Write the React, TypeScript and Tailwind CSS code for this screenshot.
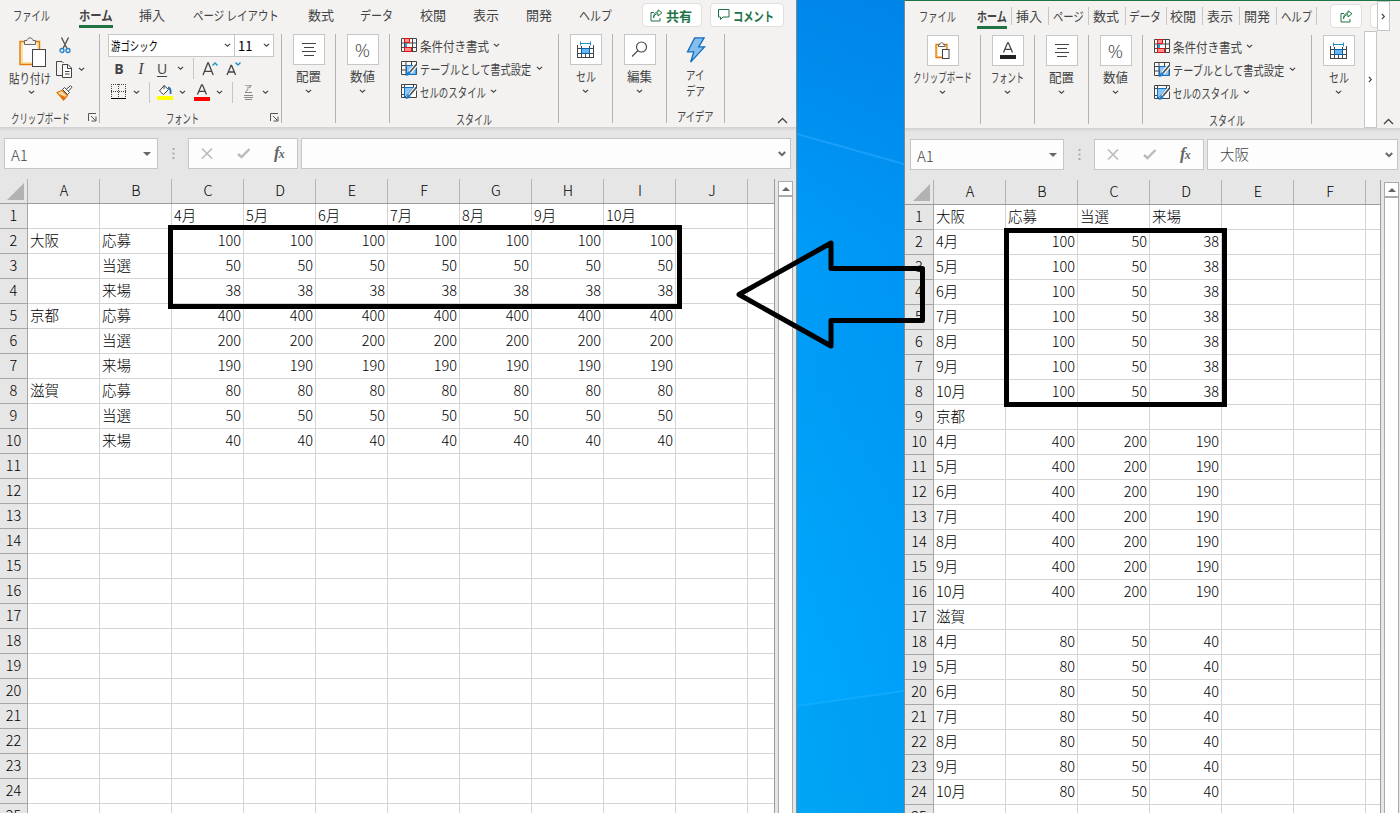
import type { ReactNode } from "react";
import { clsx } from "clsx";

// Advance width of a string in em, full-width kana and kanji counting as 1
const emWidth = (s: string) =>
  [...s].reduce((n, c) => n + (c === " " ? 0.22 : c.charCodeAt(0) < 256 ? 0.56 : 1), 0);

interface LabelProps {
  text: string;
  width: number;
  size?: number;
  className?: string;
}

// UI label squeezed to a given width, like the proportional kana of the ribbon
function Label({ text, width, size = 13, className }: LabelProps) {
  return (
    <span className={clsx("block shrink-0 leading-[15px] whitespace-nowrap", className)} style={{ width, fontSize: size }}>
      <span className="inline-block origin-left" style={{ transform: `scaleX(${width / (emWidth(text) * size)})` }}>
        {text}
      </span>
    </span>
  );
}

function Chevron({ className }: { className?: string }) {
  return (
    <svg className={clsx("block shrink-0", className)} width="7" height="5" viewBox="0 0 7 5" fill="none" stroke="#444" strokeWidth="1.2">
      <path d="M0.9 0.9L3.5 3.3L6.1 0.9" />
    </svg>
  );
}

function Launcher({ className }: { className?: string }) {
  return (
    <svg className={className} width="9" height="9" viewBox="0 0 9 9" fill="none" stroke="#555">
      <path d="M0.5 8V0.5H8M3 3L7.5 7.5M8 3.5V8H3.5" />
    </svg>
  );
}

function PasteIcon({ className }: { className?: string }) {
  return (
    <svg className={className} width="28" height="31" viewBox="0 0 28 31" fill="none">
      <path d="M1 4.5H20.5V27.5H1Z" fill="#fbe0a0" stroke="#e07b10" strokeWidth="1.4" />
      <path d="M4 7H18V25H4Z" fill="#fafafa" />
      <path d="M5.5 7.5V3.5H8C8.5 0 13.5 0 14 3.5H16.5V7.5Z" fill="#f3f2f1" stroke="#666" />
      <rect x="13.5" y="12.5" width="13" height="17" fill="#fff" stroke="#444" />
    </svg>
  );
}

function SmallPasteIcon() {
  return (
    <svg width="15" height="17" viewBox="0 0 15 17" fill="none">
      <path d="M1 2.5H12V15.5H1Z" fill="#fbe0a0" stroke="#e07b10" strokeWidth="1.3" />
      <path d="M3 5H10V14H3Z" fill="#fff" />
      <path d="M3.5 4.5V2.5H5C5 0 8.5 0 8.5 2.5H10V4.5Z" fill="#fff" stroke="#666" />
      <rect x="7.5" y="7.5" width="6.5" height="9" fill="#fff" stroke="#444" />
    </svg>
  );
}

function ScissorsIcon() {
  return (
    <svg width="12" height="17" viewBox="0 0 12 17" fill="none">
      <path d="M2.5 0.5L8 11.5M9.5 0.5L4 11.5" stroke="#555" strokeWidth="1.4" />
      <circle cx="3" cy="13.5" r="2" stroke="#1e7fc8" strokeWidth="1.3" />
      <circle cx="9" cy="13.5" r="2" stroke="#1e7fc8" strokeWidth="1.3" />
    </svg>
  );
}

function CopyIcon() {
  return (
    <svg width="17" height="17" viewBox="0 0 17 17" fill="none" stroke="#444">
      <path d="M6 14.5H0.5V0.5H6L7.5 2" />
      <path d="M6.5 3.5H12L15.5 7V16.5H6.5Z" fill="#fafafa" />
      <path d="M11.5 3.5V7.5H15.5M9 10.5H13.5M9 13H13.5" />
    </svg>
  );
}

function BrushIcon() {
  return (
    <svg width="17" height="16" viewBox="0 0 17 16" fill="none">
      <path d="M1 7.5L6 5.5L11.5 10.5L7.5 15Z" fill="#fcdca8" stroke="#e07b10" strokeWidth="1.2" />
      <path d="M4 10L9.5 12.5L7.5 15Z" fill="#e06a00" stroke="#e07b10" />
      <path d="M6.5 4.5L8.5 2.5L13.5 7.5L11.5 9.5Z" fill="#fff" stroke="#444" />
      <path d="M10.5 4L14.5 0.8L16 2.2L12.5 6" fill="#fff" stroke="#444" />
    </svg>
  );
}

function BorderIcon() {
  return (
    <svg width="16" height="16" viewBox="0 0 16 16" fill="none" stroke="#444">
      <path d="M0 0.5H15M0.5 0V14M14.5 0V14M7.5 0V14M0 7.5H15" strokeDasharray="1 1" />
      <path d="M0 14.5H15" stroke="#000" />
    </svg>
  );
}

function BucketIcon() {
  return (
    <svg width="16" height="16" viewBox="0 0 16 16" fill="none">
      <path d="M7 1.5L2.5 7L6.5 10.5L11.5 5.5L7 1.5V5" fill="#fafafa" stroke="#444" />
      <path d="M11 3.5C13.5 4 14 6 13.5 10" stroke="#1e6fb8" strokeWidth="1.8" />
      <rect y="12" width="16" height="4" fill="#ffff00" />
    </svg>
  );
}

function FontColorIcon({ dark }: { dark?: boolean }) {
  return (
    <svg width="16" height="17" viewBox="0 0 16 17" fill="none">
      <path d="M3.5 10.5L7.6 0.8H8.4L12.5 10.5M5 7.3H11" stroke="#444" strokeWidth="1.3" />
      <rect y="13" width="16" height="4" fill={dark ? "#222" : "#ff0000"} />
    </svg>
  );
}

function SizeIcon({ down }: { down?: boolean }) {
  return (
    <svg width="16" height="16" viewBox="0 0 16 16" fill="none">
      <path d={down ? "M1 14L5 4.5H5.6L9.6 14M2.4 11H8.2" : "M1 14L5.8 2H6.4L11.2 14M2.8 10.3H9.4"} stroke="#444" strokeWidth="1.3" />
      <path d={down ? "M9.5 1.5L12 4L14.5 1.5" : "M10.5 4.5L13 2L15.5 4.5"} stroke="#1e8fc8" strokeWidth="1.4" />
    </svg>
  );
}

function AlignIcon() {
  return (
    <svg width="16" height="15" viewBox="0 0 16 15" fill="none" stroke="#444">
      <path d="M1 1.5H15M3 5.5H13M1 9.5H15M3 13.5H13" />
    </svg>
  );
}

function CellIcon() {
  return (
    <svg width="17" height="18" viewBox="0 0 17 18" fill="none">
      <path d="M0.5 4V17M4.5 4V17M12.5 4V17M16.5 4V17M0 7.5H17M0 12.5H17M0 16.5H17M8.5 13V17" stroke="#444" />
      <path d="M4.5 7.5H12.5V12.5H4.5Z" fill="#6cb4ee" stroke="#0063b1" />
      <path d="M3 0H14V5H3Z" fill="#fff" />
      <path d="M3.5 2.5H13.5M3.5 0.5V4.5M13.5 0.5V4.5" stroke="#1e8fc8" />
    </svg>
  );
}

function ConditionalIcon() {
  return (
    <svg width="16" height="15" viewBox="0 0 16 15" fill="none">
      <path d="M0.5 0.5H15.5V13.5H0.5ZM0 5H16M0 9.5H16M3.5 0V14M11.5 0V14" fill="#fafafa" stroke="#444" />
      <path d="M4 5H6V9H4Z" fill="#3a96dd" />
      <path d="M3.5 0.5H8.5V4.5H3.5ZM3.5 9.5H10.5V13.5H3.5Z" fill="#ff8f8f" stroke="#e01010" />
    </svg>
  );
}

function TableIcon({ styles }: { styles?: boolean }) {
  return (
    <svg width="16" height="16" viewBox="0 0 16 16" fill="none">
      <path d="M0.5 0.5H15.5V13.5H0.5Z" fill="#fafafa" stroke="#444" />
      <path d={styles ? "M0 3.5H16M0 10.5H5M3.5 0V14M12.5 0V4" : "M0 4.5H16M0 9H6M5 0V14M10.5 0V5"} stroke="#444" />
      <path d={styles ? "M3.5 3.5H13L5 12.5H3.5Z" : "M5.5 4.5H15V13.5H5.5Z"} fill="#8cc4f4" stroke="#1070c0" />
      <path d="M15 4L9 11" stroke="#fff" strokeWidth="4" />
      <path d="M15.3 3.5L9 11" stroke="#555" strokeWidth="1.8" />
      <path d="M4 14.8C6 14 5.5 11 8 10.5C10.5 11 10 15 4 14.8Z" fill="#1e7fd0" />
    </svg>
  );
}

function SearchIcon() {
  return (
    <svg width="17" height="17" viewBox="0 0 17 17" fill="none" stroke="#444" strokeWidth="1.1">
      <circle cx="10.5" cy="6" r="5" />
      <path d="M7 9.5L1 15.5" />
    </svg>
  );
}

function BoltIcon() {
  return (
    <svg width="22" height="30" viewBox="0 0 22 30" fill="none">
      <path d="M9.5 1H20L14 11H20.5L5 28L8.5 16.5H1.5Z" fill="#83beec" stroke="#0f6cbd" strokeWidth="1.4" />
    </svg>
  );
}

function ShareIcon() {
  return (
    <svg width="13" height="13" viewBox="0 0 13 13" fill="none" stroke="#217346">
      <path d="M4 3.5H1V12H10V9" />
      <path d="M3.5 9C4 6 5.5 4.7 8 4.7V7L12 3.7L8 0.9V3C5 3 3.5 5.5 3.5 9Z" />
    </svg>
  );
}

function CommentIcon() {
  return (
    <svg width="12" height="12" viewBox="0 0 12 12" fill="none" stroke="#217346">
      <path d="M0.5 0.5H11V8H5L2.5 10.5V8H0.5Z" />
    </svg>
  );
}

function Divider({ className }: { className?: string }) {
  return <div className={clsx("w-px shrink-0 bg-[#c8c6c4]", className)} />;
}

interface BoxGroupProps {
  icon: ReactNode;
  text: string;
  textWidth: number;
  className?: string;
}

function BoxGroup({ icon, text, textWidth, className }: BoxGroupProps) {
  return (
    <div className={clsx("flex h-[89px] shrink-0 flex-col items-center", className)}>
      <button className="flex h-[31px] w-8 shrink-0 items-center justify-center border border-[#c6c6c6] bg-white">{icon}</button>
      <Label text={text} width={textWidth} className="mt-[3px]" />
      <Chevron className="mt-[6px]" />
    </div>
  );
}

function StyleGroup({ className }: { className?: string }) {
  const items = [
    { icon: <ConditionalIcon />, text: "条件付き書式", width: 69 },
    { icon: <TableIcon />, text: "テーブルとして書式設定", width: 112 },
    { icon: <TableIcon styles />, text: "セルのスタイル", width: 66 },
  ];
  return (
    <div className={clsx("flex h-[89px] shrink-0 flex-col border-r border-[#b5b3b1] pl-[11px]", className)}>
      {items.map((item) => (
        <div key={item.text} className="flex h-[23px] shrink-0 items-center">
          {item.icon}
          <Label text={item.text} width={item.width} className="mb-px ml-[3px]" />
          <Chevron className="ml-1" />
        </div>
      ))}
      <Label text="スタイル" width={36} className="mt-2 ml-[55px]" />
    </div>
  );
}

function ClipboardGroup() {
  return (
    <div className="flex h-[89px] w-[100px] shrink-0 flex-col border-r border-[#b5b3b1]">
      <div className="flex h-[76px] shrink-0">
        <div className="flex w-[56px] flex-col items-center pt-[3px] pl-1">
          <PasteIcon className="ml-[6px] shrink-0" />
          <Label text="貼り付け" width={42} className="mt-0.5" />
          <Chevron className="mt-[5px] ml-0.5" />
        </div>
        <div className="flex flex-col gap-[7px] pt-[3px]">
          <div className="pl-[3px]"><ScissorsIcon /></div>
          <div className="flex items-center gap-[5px]">
            <CopyIcon />
            <Chevron />
          </div>
          <BrushIcon />
        </div>
      </div>
      <div className="flex items-center pl-[11px]">
        <Label text="クリップボード" width={59} />
        <Launcher className="ml-[18px]" />
      </div>
    </div>
  );
}

function FontGroup() {
  return (
    <div className="flex h-[89px] w-[182px] shrink-0 flex-col border-r border-[#b5b3b1] pl-2">
      <div className="flex h-[23px] shrink-0">
        <div className="flex w-[127px] items-center justify-between border border-[#c6c6c6] bg-white pr-[3px] pl-0.5 text-black">
          <Label text="游ゴシック" width={47} size={12.5} />
          <Chevron />
        </div>
        <div className="-ml-px flex w-[40px] items-center justify-between border border-[#c6c6c6] bg-white pr-[3px] pl-[3px] text-black">
          <span className="text-[13px] leading-4">11</span>
          <Chevron />
        </div>
      </div>
      <div className="flex h-[23px] shrink-0 items-center font-['Open_Sans','Noto_Sans',sans-serif] text-[14px] leading-4">
        <span className="w-[22px] text-center font-bold">B</span>
        <span className="w-[22px] text-center font-['Liberation_Serif',serif] text-[16px] italic">I</span>
        <span className="w-5 text-center underline underline-offset-2">U</span>
        <span className="flex w-[17px] justify-center"><Chevron /></span>
        <Divider className="ml-1 h-[21px]" />
        <span className="ml-2"><SizeIcon /></span>
        <span className="ml-2"><SizeIcon down /></span>
      </div>
      <div className="flex h-6 shrink-0 items-center">
        <span className="w-[21px] pl-[3px]"><BorderIcon /></span>
        <span className="flex w-[14px] justify-center"><Chevron /></span>
        <Divider className="ml-1.5 h-[21px]" />
        <span className="ml-[7px]"><BucketIcon /></span>
        <Chevron className="ml-[6px]" />
        <span className="ml-2"><FontColorIcon /></span>
        <Chevron className="ml-[6px]" />
        <Divider className="ml-[9px] h-[21px]" />
        <span className="ml-[11px] flex w-2 flex-col items-center text-[8px] leading-[8px] text-[#777]">
          ア
          <svg width="9" height="8" viewBox="0 0 9 8" stroke="#888"><path d="M1 0.5H8M0 3.5H9M0 5.5H9M1 7.5H8" /></svg>
        </span>
        <Chevron className="ml-[10px]" />
      </div>
      <div className="mt-1.5 flex items-center pl-[58px]">
        <Label text="フォント" width={33} />
        <Launcher className="ml-[71px]" />
      </div>
    </div>
  );
}

function Collapse({ className }: { className?: string }) {
  return (
    <svg className={className} width="11" height="7" viewBox="0 0 11 7" fill="none" stroke="#444" strokeWidth="1.3">
      <path d="M1 6L5.5 1.5L10 6" />
    </svg>
  );
}

const percent = <span className="font-['Open_Sans',sans-serif] text-[19px] leading-5 font-light">%</span>;

function LeftRibbon() {
  const tabs = [
    { text: "ファイル", width: 37, className: "ml-[13px]" },
    { text: "ホーム", width: 34, className: "ml-[29px]", active: true },
    { text: "挿入", width: 26, className: "ml-[26px]" },
    { text: "ページ レイアウト", width: 86, className: "ml-[28px]" },
    { text: "数式", width: 26, className: "ml-[29px]" },
    { text: "データ", width: 33, className: "ml-[26px]" },
    { text: "校閲", width: 26, className: "ml-[27px]" },
    { text: "表示", width: 26, className: "ml-[27px]" },
    { text: "開発", width: 26, className: "ml-[27px]" },
    { text: "ヘルプ", width: 33, className: "ml-[27px]" },
  ];
  return (
    <div className="h-[127px] shrink-0 bg-[#f3f2f1] text-[#444]">
      <div className="flex h-[34px]">
        {tabs.map((tab) => (
          <div key={tab.text} className={clsx("h-7 shrink-0 pt-[7px]", tab.className, tab.active && "border-b-[3px] border-[#217346] font-bold")}>
            <Label text={tab.text} width={tab.width} />
          </div>
        ))}
        <button className="mt-[3px] ml-[30px] flex h-6 w-[60px] shrink-0 items-center rounded-sm border border-[#e1dfdd] bg-white pl-[7px] font-bold text-[#217346]">
          <ShareIcon />
          <Label text="共有" width={26} className="ml-[3px]" />
        </button>
        <button className="mt-[3px] ml-2 flex h-6 w-[74px] shrink-0 items-center rounded-sm border border-[#e1dfdd] bg-white pl-[7px] font-bold text-[#217346]">
          <CommentIcon />
          <Label text="コメント" width={41} className="ml-[3px]" />
        </button>
      </div>
      <div className="flex">
        <ClipboardGroup />
        <FontGroup />
        <BoxGroup icon={<AlignIcon />} text="配置" textWidth={25} className="w-[54px] border-r border-[#b5b3b1]" />
        <BoxGroup icon={percent} text="数値" textWidth={25} className="w-[54px] border-r border-[#b5b3b1]" />
        <StyleGroup className="w-[169px]" />
        <BoxGroup icon={<CellIcon />} text="セル" textWidth={20} className="w-[54px] border-r border-[#b5b3b1]" />
        <BoxGroup icon={<SearchIcon />} text="編集" textWidth={25} className="w-[54px] border-r border-[#b5b3b1]" />
        <div className="flex h-[89px] w-[58px] shrink-0 flex-col items-center border-r border-[#b5b3b1] pt-[3px]">
          <BoltIcon />
          <Label text="アイ" width={19} size={12.5} className="mt-[3px]" />
          <Label text="デア" width={19} size={12.5} className="mt-px" />
          <Label text="アイデア" width={37} className="mt-[10px]" />
        </div>
        <Collapse className="mt-[83px] ml-[52px]" />
      </div>
    </div>
  );
}

function RightRibbon() {
  const tabs = [
    { text: "挿入", width: 26, className: "w-[37px] pl-1" },
    { text: "ページ", width: 31, className: "w-10 pl-1" },
    { text: "数式", width: 26, className: "w-[37px] pl-1" },
    { text: "データ", width: 32, className: "w-[41px] pl-[3px]" },
    { text: "校閲", width: 26, className: "w-9 pl-[3px]" },
    { text: "表示", width: 26, className: "w-[37px] pl-1" },
    { text: "開発", width: 26, className: "w-[37px] pl-1" },
    { text: "ヘルプ", width: 31, className: "w-10 pl-1" },
  ];
  return (
    <div className="h-[127px] shrink-0 bg-[#f3f2f1] text-[#444]">
      <div className="flex h-[30px]">
        <Label text="ファイル" width={37} className="mt-[7px] ml-[14px]" />
        <div className="ml-[21px] h-7 border-b-[3px] border-[#217346] pt-[7px] font-bold">
          <Label text="ホーム" width={30} />
        </div>
        <Divider className="mt-1.5 ml-1 h-[18px]" />
        {tabs.map((tab) => (
          <div key={tab.text} className={clsx("mt-1.5 h-[18px] shrink-0 border-r border-[#c8c6c4] pt-px", tab.className)}>
            <Label text={tab.text} width={tab.width} />
          </div>
        ))}
        <button className="mt-[3px] ml-[13px] flex h-6 w-8 shrink-0 items-center justify-center rounded-sm border border-[#e1dfdd] bg-white">
          <ShareIcon />
        </button>
        <div className="mt-[3px] ml-2 h-6 w-[7px] shrink-0 rounded-l-sm border border-r-0 border-[#e1dfdd] bg-white" />
        <button className="flex h-[30px] w-[13px] shrink-0 items-center justify-center border border-[#c6c6c6] bg-white">
          <Chevron className="-rotate-90" />
        </button>
      </div>
      <div className="flex h-[97px]">
        <BoxGroup icon={<SmallPasteIcon />} text="クリップボード" textWidth={59} className="mt-1 w-[76px] border-r border-[#b5b3b1]" />
        <BoxGroup icon={<FontColorIcon dark />} text="フォント" textWidth={33} className="mt-1 w-[54px] border-r border-[#b5b3b1]" />
        <BoxGroup icon={<AlignIcon />} text="配置" textWidth={25} className="mt-1 w-[54px] border-r border-[#b5b3b1]" />
        <BoxGroup icon={percent} text="数値" textWidth={25} className="mt-1 w-[54px] border-r border-[#b5b3b1]" />
        <StyleGroup className="mt-1 w-[169px]" />
        <BoxGroup icon={<CellIcon />} text="セル" textWidth={20} className="mt-1 w-[52px] pl-px" />
        <button className="flex h-[97px] w-[13px] shrink-0 items-center justify-center border border-[#c6c6c6] bg-white">
          <Chevron className="-rotate-90" />
        </button>
        <Collapse className="mt-[87px] ml-[6px]" />
      </div>
    </div>
  );
}

function FormulaBar({ value, className }: { value: string; className: string }) {
  return (
    <div className="h-[52px] shrink-0 bg-linear-to-b from-[#d0d0d0] via-[#e6e6e6] via-8% to-[#e6e6e6] pt-[11px]">
      <div className={clsx("flex h-[31px] text-[#444]", className)}>
        <div className="flex w-[154px] shrink-0 items-center justify-between border border-[#c6c6c6] bg-[#fdfdfd] pr-[6px] pl-[6px]">
          <span className="pt-0.5 text-[15px] leading-4 font-light">A1</span>
          <svg width="8" height="4" viewBox="0 0 8 4"><path d="M0 0H8L4 4Z" fill="#666" /></svg>
        </div>
        <div className="flex w-[30px] shrink-0 items-center justify-center">
          <svg width="3" height="12" viewBox="0 0 3 12" fill="#aaa"><path d="M0.5 0H2.5V2H0.5ZM0.5 4.5H2.5V6.5H0.5ZM0.5 9H2.5V11H0.5Z" /></svg>
        </div>
        <div className="flex w-[110px] shrink-0 items-center border border-[#c6c6c6] bg-[#fdfdfd] pl-3">
          <svg width="12" height="11" viewBox="0 0 12 11" stroke="#bbb" strokeWidth="1.6"><path d="M1 0.5L11 10.5M11 0.5L1 10.5" /></svg>
          <svg className="ml-6" width="14" height="11" viewBox="0 0 14 11" fill="none" stroke="#bbb" strokeWidth="2.4"><path d="M1 6L4.5 9L12.5 1" /></svg>
          <span className="ml-[23px] pb-px font-['Liberation_Serif',serif] text-[17px] leading-4 font-bold text-[#666] italic">
            f<span className="-ml-px text-[12px]">x</span>
          </span>
        </div>
        <div className="ml-[3px] flex flex-1 items-center justify-between border border-[#c6c6c6] bg-[#fdfdfd] pr-1 pl-3">
          <span className="pb-0.5 text-[14.5px] leading-4 font-light">{value}</span>
          <svg width="8" height="6" viewBox="0 0 8 6" fill="none" stroke="#666" strokeWidth="2"><path d="M0.8 1L4 4.2L7.2 1" /></svg>
        </div>
      </div>
    </div>
  );
}

interface SheetProps {
  columns: string[];
  rows: string[][];
  headWidth: string;
  restWidth: string;
}

function Sheet({ columns, rows, headWidth, restWidth }: SheetProps) {
  return (
    <div className="shrink-0 overflow-hidden border-r border-[#9b9b9b] text-[14.5px] leading-[22px] font-light text-black">
      <div className="flex h-[25px] border-b border-[#9b9b9b] bg-[#e6e6e6]">
        <div className={clsx("flex shrink-0 items-end justify-end border-r border-[#b0b0b0] pr-[3px] pb-[3px]", headWidth)}>
          <svg width="17" height="17" viewBox="0 0 17 17"><path d="M17 0V17H0Z" fill="#b2b2b2" /></svg>
        </div>
        {columns.map((c) => (
          <div key={c} className="w-[72px] shrink-0 border-r border-[#b4b4b4] pl-px text-center">{c}</div>
        ))}
      </div>
      {Array.from({ length: 25 }, (_, i) => (
        <div key={i} className="flex h-[25px]">
          <div className={clsx("shrink-0 border-r border-b border-[#a6a6a6] bg-[#e6e6e6] text-center", headWidth)}>{i + 1}</div>
          {columns.map((c, j) => {
            const value = rows[i]?.[j] ?? "";
            return (
              <div key={c} className={clsx("w-[72px] shrink-0 border-r border-b border-[#d4d4d4] bg-white px-0.5 whitespace-nowrap", /^\d+$/.test(value) && "text-right")}>
                {value}
              </div>
            );
          })}
          <div className={clsx("shrink-0 border-b border-[#d4d4d4] bg-white", restWidth)} />
        </div>
      ))}
    </div>
  );
}

function ScrollBar() {
  return (
    <div className="mt-[2px] ml-[3px] flex w-[15px] shrink-0 flex-col border-x border-[#ababab] bg-white">
      <div className="flex h-4 shrink-0 items-center justify-center border-t border-b-2 border-[#ababab]">
        <svg width="8" height="4" viewBox="0 0 8 4"><path d="M0 4H8L4 0Z" fill="#666" /></svg>
      </div>
    </div>
  );
}

const months = ["4月", "5月", "6月", "7月", "8月", "9月", "10月"];
const venues = [
  { name: "大阪", counts: ["100", "50", "38"] },
  { name: "京都", counts: ["400", "200", "190"] },
  { name: "滋賀", counts: ["80", "50", "40"] },
];
const kinds = ["応募", "当選", "来場"];

const leftRows = [
  ["", "", ...months],
  ...venues.flatMap((v) => kinds.map((kind, k) => [k === 0 ? v.name : "", kind, ...months.map(() => v.counts[k])])),
];

const rightRows = venues.flatMap((v, i) => [
  i === 0 ? [v.name, ...kinds] : [v.name],
  ...months.map((m) => [m, ...v.counts]),
]);

export default function App() {
  return (
    <div className="relative flex h-[813px] w-[1400px] overflow-hidden bg-[#009cf8] font-['Noto_Sans_CJK_JP',sans-serif]">
      <div className="flex w-[797px] shrink-0 flex-col border-r border-[#7d8a94] bg-[#e6e6e6]">
        <LeftRibbon />
        <FormulaBar value="" className="mr-[5px] ml-1" />
        <div className="flex min-h-0 flex-1">
          <Sheet columns={["A", "B", "C", "D", "E", "F", "G", "H", "I", "J"]} rows={leftRows} headWidth="w-7" restWidth="w-[26px]" />
          <ScrollBar />
        </div>
      </div>

      {/* Desktop wallpaper */}
      <div className="w-[107px] shrink-0 bg-linear-to-b from-[#0087e9] via-[#009bf7] via-30% to-[#00a6f5]">
        <svg className="block" width="107" height="813" viewBox="0 0 107 813">
          <defs>
            <linearGradient id="beam" x1="0" y1="0" x2="0" y2="1">
              <stop offset="0" stopColor="#00a8ff" stopOpacity="0" />
              <stop offset="1" stopColor="#00a8ff" stopOpacity="0.9" />
            </linearGradient>
            <linearGradient id="shade" x1="0" y1="0" x2="1" y2="0">
              <stop offset="0" stopColor="#0070e0" stopOpacity="0" />
              <stop offset="1" stopColor="#0070e0" stopOpacity="0.14" />
            </linearGradient>
          </defs>
          <path d="M0 400H107V691L0 706Z" fill="url(#beam)" />
          <path d="M0 0H107V813H0Z" fill="url(#shade)" />
          <path d="M0 134L107 164" stroke="#2aa9ff" strokeWidth="2" opacity="0.6" />
          <path d="M0 706L107 691" stroke="#1cb0ff" strokeWidth="2" opacity="0.6" />
        </svg>
      </div>

      <div className="flex w-[496px] shrink-0 flex-col border-t border-l border-t-[#217346] border-l-[#7d8a94] bg-[#e6e6e6]">
        <RightRibbon />
        <FormulaBar value="大阪" className="mr-[2px] ml-[5px]" />
        <div className="flex min-h-0 flex-1">
          <Sheet columns={["A", "B", "C", "D", "E", "F"]} rows={rightRows} headWidth="w-[29px]" restWidth="w-[14px]" />
          <ScrollBar />
        </div>
      </div>

      {/* Annotations drawn over both windows */}
      <div className="absolute top-[225px] left-[168px] h-[84px] w-[514px] border-[5px] border-black" />
      <div className="absolute top-[228px] left-[1004px] h-[179px] w-[223px] border-[5px] border-black" />
      <svg className="absolute top-[236px] left-[730px]" width="200" height="116" viewBox="730 236 200 116" fill="none">
        <path d="M739 294.5L831 243V268.5H922.5V320.5H831V346Z" stroke="#000" strokeWidth="5" strokeLinejoin="round" />
      </svg>
    </div>
  );
}
